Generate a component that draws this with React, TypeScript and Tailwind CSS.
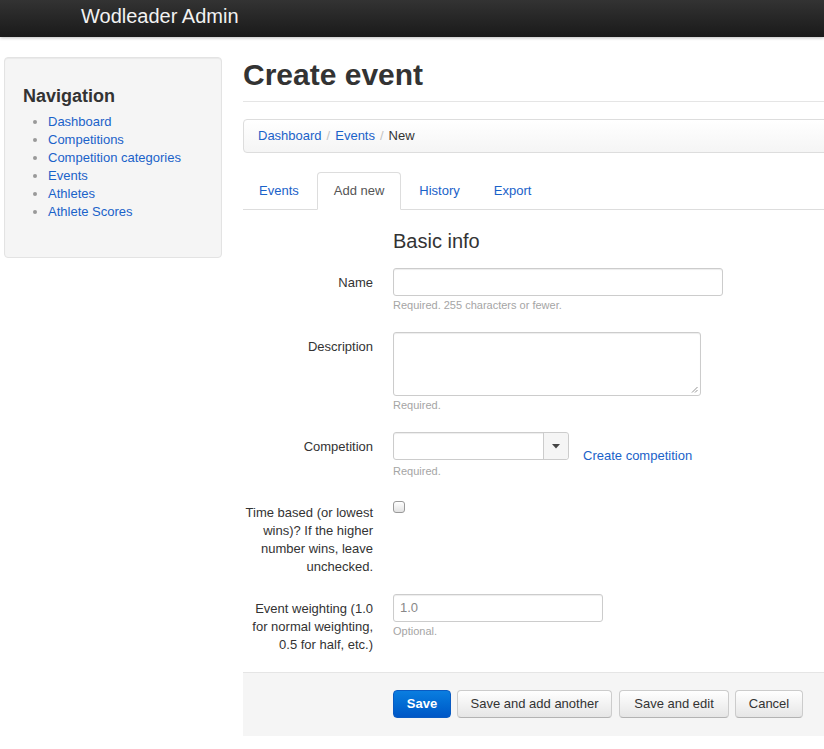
const link = "text-[#1a62c9]";

function Field({
  label,
  children,
  help,
}: {
  label: React.ReactNode;
  children: React.ReactNode;
  help?: string;
}) {
  return (
    <div className="mb-[18px] flex">
      <label className="w-[130px] shrink-0 pt-[6px] text-right leading-[18px]">{label}</label>
      <div className="ml-[20px]">
        {children}
        {help && <p className="text-[11px] leading-[18px] text-[#a5a5a5]">{help}</p>}
      </div>
    </div>
  );
}

function TextInput({ width, value }: { width: string; value?: string }) {
  return (
    <div
      className={`${width} flex h-[28px] items-center rounded-[3px] border border-[#ccc] bg-white px-[6px] text-[#888] shadow-[inset_0_1px_1px_rgba(0,0,0,0.075)]`}
    >
      {value}
    </div>
  );
}

export default function App() {
  const nav = ["Dashboard", "Competitions", "Competition categories", "Events", "Athletes", "Athlete Scores"];
  const tabs = ["Events", "Add new", "History", "Export"];
  const buttons = [
    { label: "Save and add another", w: "w-[155px]", ml: "ml-[6px]" },
    { label: "Save and edit", w: "w-[110px]", ml: "ml-[7px]" },
    { label: "Cancel", w: "w-[68px]", ml: "ml-[6px]" },
  ];

  return (
    <div
      className="min-h-[749px] w-full overflow-hidden bg-white text-[13px] leading-[18px] text-[#333]"
      style={{ fontFamily: '"Liberation Sans", Arial, sans-serif' }}
    >
      {/* top bar */}
      <div className="h-[37px] bg-gradient-to-b from-[#333] to-[#1a1a1a] pl-[81px] text-[20px] leading-[33px] text-[#f2f2f2] shadow-[0_1px_3px_rgba(0,0,0,0.25)]">
        Wodleader Admin
      </div>

      <div className="flex pl-[4px] pt-[20px]">
        {/* sidebar */}
        <div className="h-[201px] w-[218px] shrink-0 rounded-[4px] border border-[#e3e3e3] bg-[#f5f5f5] px-[18px] pt-[28px] shadow-[inset_0_1px_1px_rgba(0,0,0,0.05)]">
          <h3 className="text-[18px] font-bold leading-[20px] text-[#333]">Navigation</h3>
          <ul className="ml-[25px] mt-[7px] list-disc marker:text-[#999]">
            {nav.map((n) => (
              <li key={n}>
                <a className={link}>{n}</a>
              </li>
            ))}
          </ul>
        </div>

        {/* main */}
        <div className="ml-[21px] w-[640px] shrink-0">
          <div className="border-b border-[#e5e5e5] pb-[8px]">
            <h1 className="text-[30px] font-bold leading-[36px] text-[#333]">Create event</h1>
          </div>

          <div className="mt-[17px] flex h-[34px] items-center rounded-[4px] border border-[#ddd] bg-gradient-to-b from-white to-[#f5f5f5] px-[14px] shadow-[0_1px_0_white_inset]">
            <a className={link}>Dashboard</a>
            <span className="px-[5px] text-[#c4c4c4]">/</span>
            <a className={link}>Events</a>
            <span className="px-[5px] text-[#c4c4c4]">/</span>
            <span className="text-[#333]">New</span>
          </div>

          <div className="mt-[19px] flex border-b border-[#ddd]">
            {tabs.map((t) =>
              t === "Add new" ? (
                <div
                  key={t}
                  className="-mb-px mr-[2px] rounded-t-[4px] border border-[#ddd] border-b-white bg-white px-[16px] pb-[8px] pt-[9px] text-[#555]"
                >
                  {t}
                </div>
              ) : (
                <div key={t} className={`mr-[2px] border border-transparent px-[15px] pb-[8px] pt-[9px] ${link}`}>
                  {t}
                </div>
              ),
            )}
          </div>

          {/* form */}
          <div className="pt-[13px]">
            <h2 className="mb-[9px] ml-[150px] text-[20px] leading-[36px] text-[#333]">Basic info</h2>

            <Field label="Name" help="Required. 255 characters or fewer.">
              <TextInput width="w-[330px]" />
            </Field>

            <Field label="Description" help="Required.">
              <div className="relative h-[64px] w-[308px] rounded-[3px] border border-[#ccc] bg-white shadow-[inset_0_1px_1px_rgba(0,0,0,0.075)]">
                <svg className="absolute bottom-[2px] right-[2px]" width="7" height="7" viewBox="0 0 7 7">
                  <path d="M1 6.5 L6.5 1 M4 6.5 L6.5 4" stroke="#888" strokeWidth="0.9" />
                </svg>
              </div>
            </Field>

            <div className="mb-[18px] flex">
              <label className="w-[130px] shrink-0 pt-[6px] text-right">Competition</label>
              <div className="ml-[20px]">
                <div className="flex h-[28px] w-[176px] rounded-[3px] border border-[#ccc] bg-white shadow-[inset_0_1px_1px_rgba(0,0,0,0.075)]">
                  <div className="flex-1" />
                  <div className="flex w-[25px] items-center justify-center rounded-r-[3px] border-l border-[#ccc] bg-[#f5f5f5]">
                    <svg width="8" height="5" viewBox="0 0 8 5">
                      <path d="M0 0 H8 L4 4.5 Z" fill="#444" />
                    </svg>
                  </div>
                </div>
                <p className="mt-[2px] text-[11px] leading-[18px] text-[#a5a5a5]">Required.</p>
              </div>
              <a className={`ml-[14px] pt-[15px] ${link}`}>Create competition</a>
            </div>

            <Field
              label={
                <>
                  Time based (or lowest
                  <br />
                  wins)? If the higher
                  <br />
                  number wins, leave
                  <br />
                  unchecked.
                </>
              }
            >
              <div className="mt-[3px] h-[12px] w-[12px] rounded-[3px] border border-[#9a9a9a] bg-gradient-to-b from-white to-[#e2e2e2]" />
            </Field>

            <Field
              label={
                <>
                  Event weighting (1.0
                  <br />
                  for normal weighting,
                  <br />
                  0.5 for half, etc.)
                </>
              }
              help="Optional."
            >
              <TextInput width="w-[210px]" value="1.0" />
            </Field>
          </div>

          <div className="flex border-t border-[#e5e5e5] bg-[#f5f5f5] pb-[18px] pl-[150px] pt-[17px]">
            <button className="h-[28px] w-[58px] rounded-[4px] border border-[#0a5bc2] bg-gradient-to-b from-[#0b7ee0] to-[#0057c6] font-bold text-white">
              Save
            </button>
            {buttons.map((b) => (
              <button
                key={b.label}
                className={`${b.w} ${b.ml} h-[28px] rounded-[4px] border border-[#ccc] border-b-[#b3b3b3] bg-gradient-to-b from-white to-[#e6e6e6] text-[#333]`}
              >
                {b.label}
              </button>
            ))}
          </div>
        </div>
      </div>
    </div>
  );
}
